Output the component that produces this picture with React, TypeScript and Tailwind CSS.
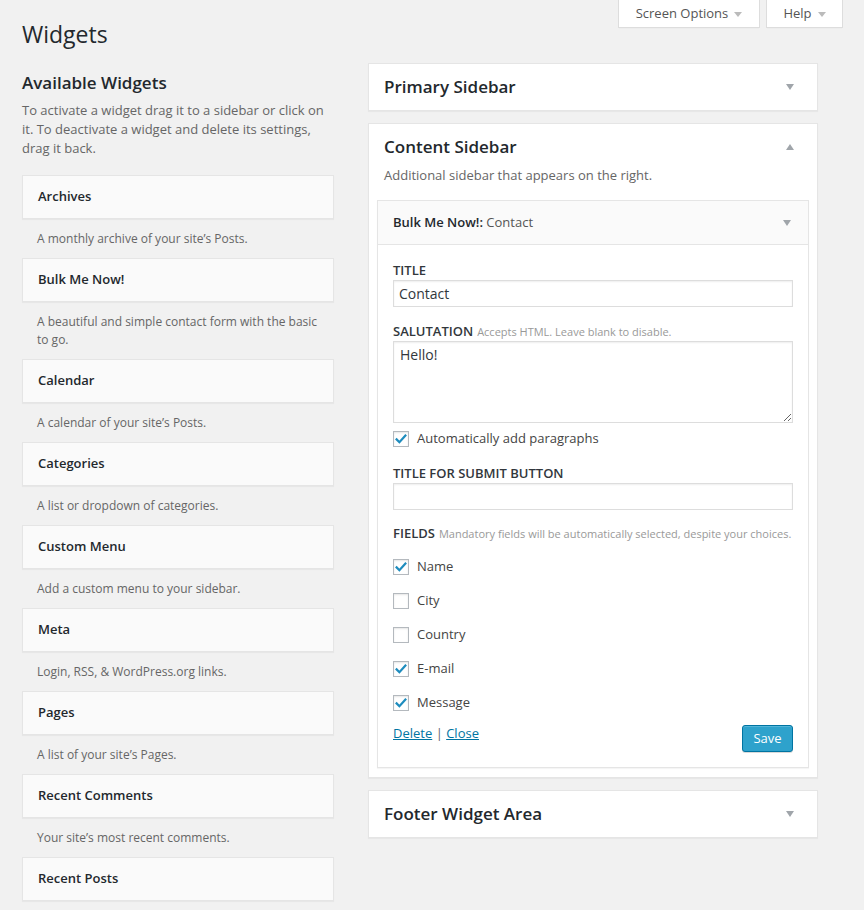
import React from "react";

const Arrow = ({ up = false, color = "#a0a5aa", w = 8, h = 6 }: { up?: boolean; color?: string; w?: number; h?: number }) => (
  <svg width={w} height={h} viewBox={`0 0 ${w} ${h}`} className="block shrink-0">
    {up ? (
      <polygon points={`0,${h} ${w},${h} ${w / 2},0`} fill={color} />
    ) : (
      <polygon points={`0,0 ${w},0 ${w / 2},${h}`} fill={color} />
    )}
  </svg>
);

const Check = ({ checked }: { checked: boolean }) => (
  <div className="w-[16px] h-[16px] shrink-0 border border-[#b4b9be] bg-white shadow-[inset_0_1px_2px_rgba(0,0,0,0.1)] flex items-center justify-center">
    {checked && (
      <svg width="14" height="14" viewBox="0 0 14 14" className="block">
        <path d="M2.6 7.4 L5.4 10.2 L11.4 3.6" fill="none" stroke="#1e8cbe" strokeWidth="2.2" strokeLinecap="square" />
      </svg>
    )}
  </div>
);

const widgets: { name: string; desc: React.ReactNode }[] = [
  { name: "Archives", desc: "A monthly archive of your site\u2019s Posts." },
  {
    name: "Bulk Me Now!",
    desc: (
      <>
        A beautiful and simple contact form with the basic
        <br />
        to go.
      </>
    ),
  },
  { name: "Calendar", desc: "A calendar of your site\u2019s Posts." },
  { name: "Categories", desc: "A list or dropdown of categories." },
  { name: "Custom Menu", desc: "Add a custom menu to your sidebar." },
  { name: "Meta", desc: "Login, RSS, & WordPress.org links." },
  { name: "Pages", desc: "A list of your site\u2019s Pages." },
  { name: "Recent Comments", desc: "Your site\u2019s most recent comments." },
  { name: "Recent Posts", desc: null },
];

const fields = [
  { label: "Name", checked: true },
  { label: "City", checked: false },
  { label: "Country", checked: false },
  { label: "E-mail", checked: true },
  { label: "Message", checked: true },
];

const Label = ({ children, hint }: { children: React.ReactNode; hint?: string }) => (
  <div className="h-[16px] flex items-baseline text-[13px] leading-[16px] font-semibold uppercase text-[#32373c] whitespace-nowrap">
    <span>{children}</span>
    {hint && <span className="ml-[4px] text-[11px] leading-[16px] font-normal normal-case text-[#999]">{hint}</span>}
  </div>
);

export default function App() {
  return (
    <div className="relative h-[910px] w-[864px] overflow-hidden bg-[#f1f1f1] font-['Open_Sans',sans-serif] text-[#444]">
      {/* screen meta links */}
      <div className="absolute top-0 right-[21px] flex gap-[6px]">
        <div className="w-[142px] h-[28px] pt-[1px] bg-white border border-t-0 border-[#ddd] shadow-[0_1px_1px_-1px_rgba(0,0,0,0.1)] flex items-center justify-center gap-[6px] text-[13px] text-[#555]">
          <span>Screen Options</span>
          <Arrow color="#bbb" w={8} h={5} />
        </div>
        <div className="w-[77px] h-[28px] pt-[1px] bg-white border border-t-0 border-[#ddd] shadow-[0_1px_1px_-1px_rgba(0,0,0,0.1)] flex items-center justify-center gap-[6px] text-[13px] text-[#555]">
          <span>Help</span>
          <Arrow color="#bbb" w={8} h={5} />
        </div>
      </div>

      <div className="pl-[22px] pt-[20px]">
        <h1 className="text-[23px] leading-[29px] font-normal text-[#23282d]">Widgets</h1>

        <div className="flex items-start">
          {/* left column */}
          <div className="w-[312px] shrink-0 mt-[22px]">
            <h2 className="text-[17px] leading-[24px] font-semibold text-[#23282d]">Available Widgets</h2>
            <p className="mt-[6px] text-[13px] leading-[19px] text-[#666] whitespace-nowrap">
              To activate a widget drag it to a sidebar or click on
              <br />
              it. To deactivate a widget and delete its settings,
              <br />
              drag it back.
            </p>
            <div className="mt-[17px] flex flex-col">
              {widgets.map((w) => (
                <div key={w.name}>
                  <div className="h-[44px] border border-[#e5e5e5] bg-[#fafafa] shadow-[0_1px_1px_rgba(0,0,0,0.04)] px-[15px] flex items-center text-[13px] font-semibold text-[#23282d]">
                    {w.name}
                  </div>
                  {w.desc && (
                    <div className="px-[15px] py-[10.5px] text-[12px] leading-[18px] text-[#666] whitespace-nowrap">{w.desc}</div>
                  )}
                </div>
              ))}
            </div>
          </div>

          {/* right column */}
          <div className="w-[450px] shrink-0 ml-[34px] mt-[14px] flex flex-col">
            <div className="h-[48px] border border-[#e5e5e5] bg-white shadow-[0_1px_1px_rgba(0,0,0,0.04)] flex items-center justify-between pl-[15px] pr-[23px]">
              <span className="text-[17px] font-semibold text-[#23282d]">Primary Sidebar</span>
              <Arrow />
            </div>

            <div className="mt-[12px] border border-[#e5e5e5] bg-white shadow-[0_1px_1px_rgba(0,0,0,0.04)]">
              <div className="flex items-center justify-between pl-[15px] pr-[23px] pt-[11px]">
                <span className="text-[17px] leading-[24px] font-semibold text-[#23282d]">Content Sidebar</span>
                <Arrow up />
              </div>
              <p className="px-[15px] mt-[7px] text-[13px] leading-[19px] text-[#666]">Additional sidebar that appears on the right.</p>

              <div className="mx-[8px] mt-[15px] mb-[9px] border border-[#e5e5e5] bg-white shadow-[0_1px_1px_rgba(0,0,0,0.04)]">
                <div className="h-[44px] bg-[#fafafa] border-b border-[#e5e5e5] flex items-center justify-between pl-[15px] pr-[17px] text-[13px]">
                  <span className="pt-[1px]">
                    <span className="font-semibold text-[#23282d]">Bulk Me Now!:</span>
                    <span className="text-[#555]"> Contact</span>
                  </span>
                  <Arrow />
                </div>

                <div className="px-[15px] pt-[17px] pb-[15px] flex flex-col">
                  <Label>Title</Label>
                  <input
                    readOnly
                    defaultValue="Contact"
                    className="mt-[2px] h-[27px] w-full border border-[#ddd] bg-white px-[5px] text-[14px] text-[#32373c] shadow-[inset_0_1px_2px_rgba(0,0,0,0.07)] outline-none font-['Open_Sans',sans-serif]"
                  />

                  <div className="mt-[16px]">
                    <Label hint="Accepts HTML. Leave blank to disable.">Salutation</Label>
                  </div>
                  <textarea
                    readOnly
                    defaultValue="Hello!"
                    className="mt-[2px] h-[82px] w-full border border-[#ddd] bg-white px-[6px] pt-[3px] text-[14px] leading-[20px] text-[#32373c] shadow-[inset_0_1px_2px_rgba(0,0,0,0.07)] outline-none font-['Open_Sans',sans-serif] resize-y block"
                  />

                  <div className="mt-[8px] flex items-center gap-[8px] h-[16px]">
                    <Check checked />
                    <span className="text-[13px] text-[#444]">Automatically add paragraphs</span>
                  </div>

                  <div className="mt-[18px]">
                    <Label>Title for submit button</Label>
                  </div>
                  <input
                    readOnly
                    defaultValue=""
                    className="mt-[2px] h-[27px] w-full border border-[#ddd] bg-white px-[5px] text-[14px] shadow-[inset_0_1px_2px_rgba(0,0,0,0.07)] outline-none"
                  />

                  <div className="mt-[15px]">
                    <Label hint="Mandatory fields will be automatically selected, despite your choices.">Fields</Label>
                  </div>

                  <div className="mt-[18px] flex flex-col gap-[18px]">
                    {fields.map((f) => (
                      <div key={f.label} className="flex items-center gap-[8px] h-[16px]">
                        <Check checked={f.checked} />
                        <span className="text-[13px] text-[#444]">{f.label}</span>
                      </div>
                    ))}
                  </div>

                  <div className="mt-[13px] flex items-start justify-between">
                    <div className="text-[13px] leading-[19px] text-[#444]">
                      <a className="text-[#0074a2] underline">Delete</a>
                      <span className="text-[#666]"> | </span>
                      <a className="text-[#0074a2] underline">Close</a>
                    </div>
                    <button className="mt-[1px] h-[27px] w-[51px] rounded-[3px] border border-[#0074a2] bg-[#2ea2cc] text-[13px] text-white shadow-[inset_0_1px_0_rgba(120,200,230,0.5),0_1px_0_rgba(0,0,0,0.15)]">
                      Save
                    </button>
                  </div>
                </div>
              </div>
            </div>

            <div className="mt-[12px] h-[48px] border border-[#e5e5e5] bg-white shadow-[0_1px_1px_rgba(0,0,0,0.04)] flex items-center justify-between pl-[15px] pr-[23px]">
              <span className="text-[17px] font-semibold text-[#23282d]">Footer Widget Area</span>
              <Arrow />
            </div>
          </div>
        </div>
      </div>
    </div>
  );
}
